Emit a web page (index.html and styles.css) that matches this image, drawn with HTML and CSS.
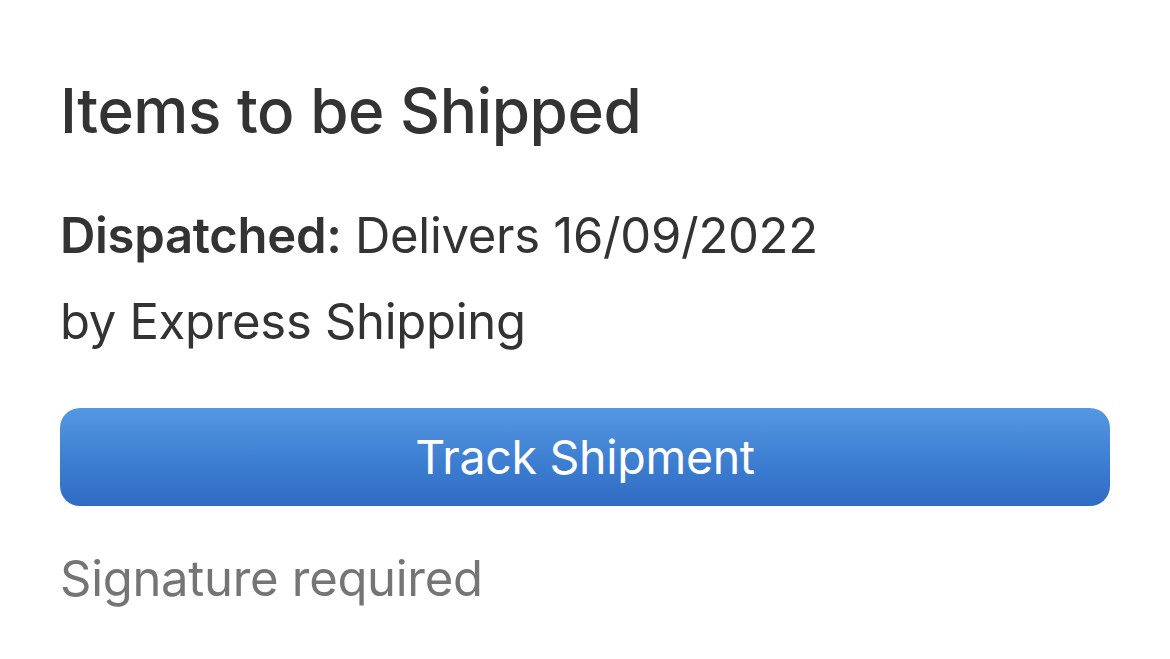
FILE: index.html
```html
<!DOCTYPE html>
<html>
<head>
<meta charset="utf-8">
<link rel="stylesheet" href="styles.css">
</head>
<body>
<main class="card">
  <h1 class="title">Items to be Shipped</h1>
  <p class="status"><strong>Dispatched:</strong> Delivers 16/09/2022</p>
  <p class="method">by Express Shipping</p>
  <button class="track">Track Shipment</button>
  <p class="note">Signature required</p>
</main>
</body>
</html>
```
FILE: styles.css
```css
html, body {
  margin: 0;
  padding: 0;
  background: #ffffff;
}
body {
  font-family: Inter, "Noto Sans", sans-serif;
  color: #333333;
}
.card {
  padding: 75px 60px 0 60px;
  display: flex;
  flex-direction: column;
}
.title {
  margin: 0;
  font-size: 62px;
  font-weight: 500;
  line-height: 72px;
  letter-spacing: -0.45px;
}
.status {
  margin: 61px 0 0 0;
  font-size: 49px;
  line-height: 56px;
  letter-spacing: -0.3px;
}
.status strong {
  font-weight: 600;
}
.method {
  margin: 30px 0 0 0;
  font-size: 49px;
  line-height: 56px;
  letter-spacing: -0.3px;
}
.track {
  margin-top: 58px;
  height: 98px;
  border: none;
  border-radius: 20px;
  background: linear-gradient(180deg, #5598e1 0%, #3f80d3 50%, #2e6cc3 100%);
  color: #ffffff;
  font-family: Inter, "Noto Sans", sans-serif;
  font-size: 46.5px;
  letter-spacing: -0.3px;
  padding: 0;
}
.note {
  margin: 45px 0 0 0;
  font-size: 49px;
  line-height: 56px;
  color: #757575;
  letter-spacing: -0.3px;
}
```
